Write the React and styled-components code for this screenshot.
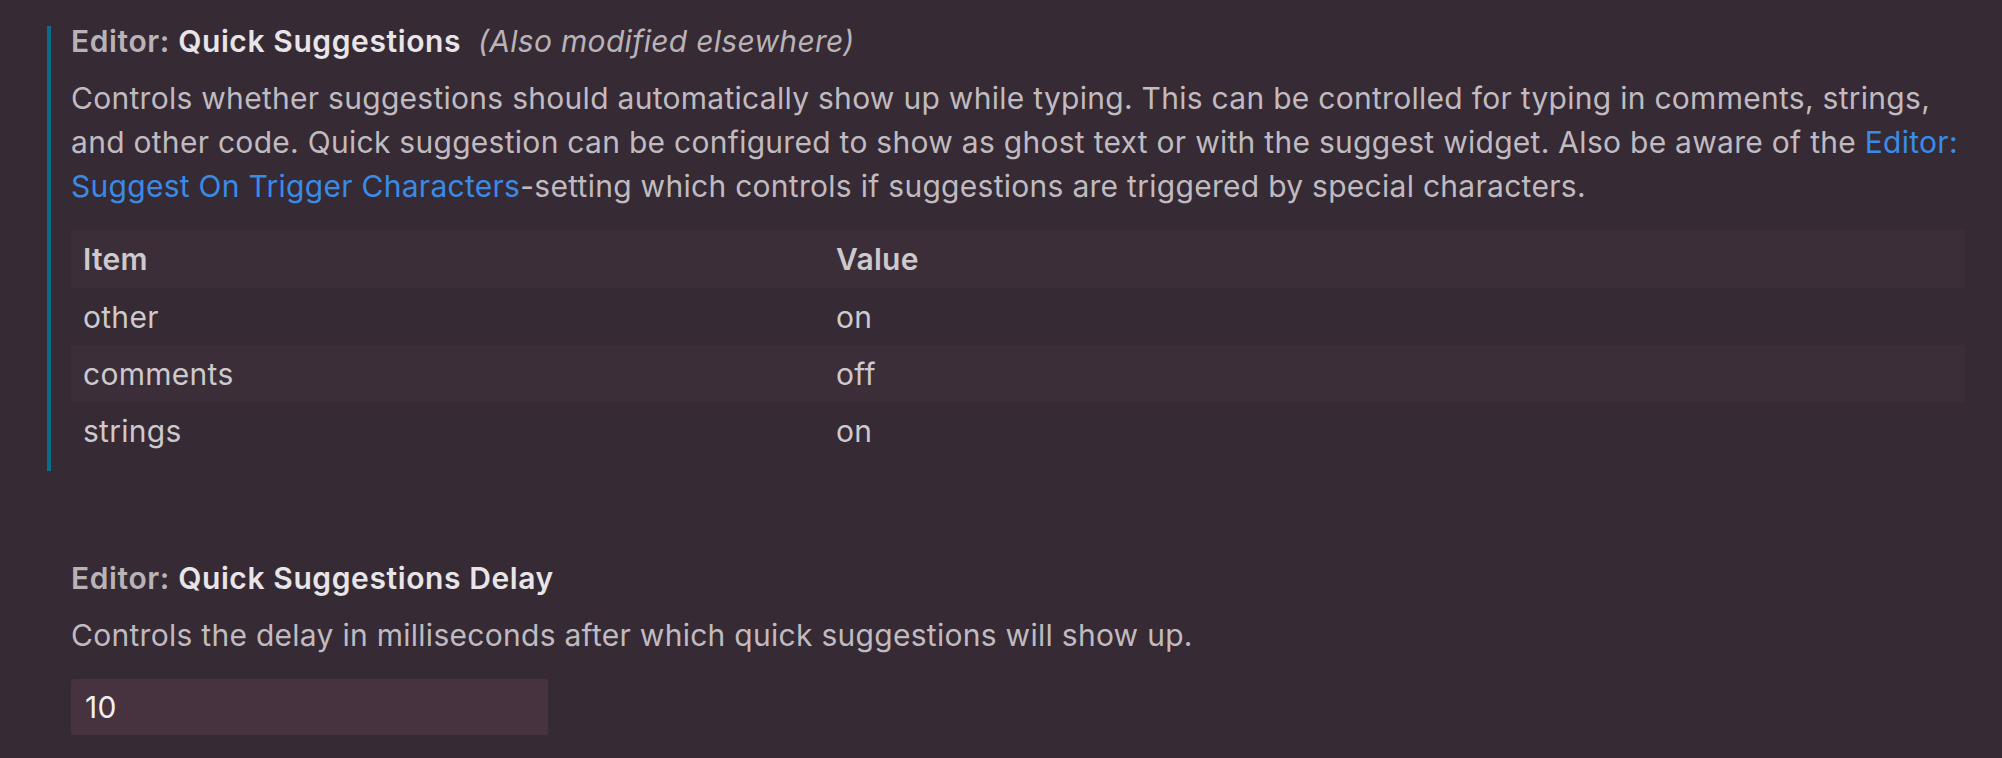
import React from 'react'
import styled, { createGlobalStyle } from 'styled-components';

const GlobalStyle = createGlobalStyle`
    html, body {
        margin: 0;
        padding: 0;
        background-color: #362a34;
    }
    body {
        font-family: Inter, "Noto Sans", sans-serif;
        letter-spacing: 0.28px;
        -webkit-font-smoothing: antialiased;
    }
`;

const rows = [
    { item: 'other', value: 'on' },
    { item: 'comments', value: 'off' },
    { item: 'strings', value: 'on' },
];

function App() {
    return (
        <>
            <GlobalStyle />
            <SettingsList>
                <SettingItem modified>
                    <Title>
                        <Category>Editor: </Category>
                        <Label>Quick Suggestions</Label>
                        <Modified>(Also modified elsewhere)</Modified>
                    </Title>
                    <Description>
                        Controls whether suggestions should automatically show up while typing. This can be controlled for typing in comments, strings, and other code. Quick suggestion can be configured to show as ghost text or with the suggest widget. Also be aware of the <Link>Editor: Suggest On Trigger Characters</Link>-setting which controls if suggestions are triggered by special characters.
                    </Description>
                    <ObjectTable>
                        <thead>
                            <HeadRow>
                                <HeadCell first>Item</HeadCell>
                                <HeadCell>Value</HeadCell>
                            </HeadRow>
                        </thead>
                        <tbody>
                            {rows.map((r, i) => (
                                <BodyRow key={r.item} striped={i % 2 === 1}>
                                    <Cell>{r.item}</Cell>
                                    <Cell>{r.value}</Cell>
                                </BodyRow>
                            ))}
                        </tbody>
                    </ObjectTable>
                </SettingItem>
                <SettingItem>
                    <Title>
                        <Category>Editor: </Category>
                        <Label>Quick Suggestions Delay</Label>
                    </Title>
                    <Description>
                        Controls the delay in milliseconds after which quick suggestions will show up.
                    </Description>
                    <NumberInput type="text" defaultValue="10" />
                </SettingItem>
            </SettingsList>
        </>
    )
}

const SettingsList = styled.div`
    display: flex;
    flex-direction: column;
    gap: 92px;
    padding: 26px 37px 0 47px;
`;

const SettingItem = styled.div.withConfig({ shouldForwardProp: p => p !== 'modified' })`
    display: flex;
    flex-direction: column;
    align-items: flex-start;
    border-left: 4px solid ${p => p.modified ? '#0c6c8c' : 'transparent'};
    padding: 0 0 12px 20px;
`;

const Title = styled.div`
    font-size: 30px;
    line-height: 30px;
    font-weight: 600;
    letter-spacing: 0.6px;
    white-space: nowrap;
`;

const Category = styled.span`
    color: #b9b3b8;
`;

const Label = styled.span`
    color: #e8e5e8;
`;

const Modified = styled.span`
    color: #b9b3b8;
    font-style: italic;
    font-weight: 400;
    letter-spacing: 0.3px;
    margin-left: 17px;
`;

const Description = styled.div`
    margin-top: 20px;
    font-size: 30px;
    line-height: 44px;
    color: #c0bbc0;
    width: 1904px;
`;

const Link = styled.span`
    color: #3a8be6;
`;

const ObjectTable = styled.table`
    margin-top: 22px;
    width: 1894px;
    border-collapse: collapse;
    font-size: 30px;
    color: #cdc9cc;
`;

const HeadRow = styled.tr`
    background-color: #3b2e39;
    height: 58px;
`;

const BodyRow = styled.tr.withConfig({ shouldForwardProp: p => p !== 'striped' })`
    background-color: ${p => p.striped ? '#3b2e39' : 'transparent'};
    height: 57px;
`;

const HeadCell = styled.th.withConfig({ shouldForwardProp: p => p !== 'first' })`
    text-align: left;
    font-weight: 600;
    padding: 0 12px;
    width: ${p => p.first ? '729px' : 'auto'};
`;

const Cell = styled.td`
    padding: 0 12px;
`;

const NumberInput = styled.input`
    margin-top: 22px;
    width: 477px;
    height: 56px;
    box-sizing: border-box;
    border: none;
    outline: none;
    border-radius: 2px;
    background-color: #47323f;
    color: #f2eff2;
    font-family: inherit;
    font-size: 30px;
    letter-spacing: inherit;
    padding: 0 14px;
`;

export default App;
